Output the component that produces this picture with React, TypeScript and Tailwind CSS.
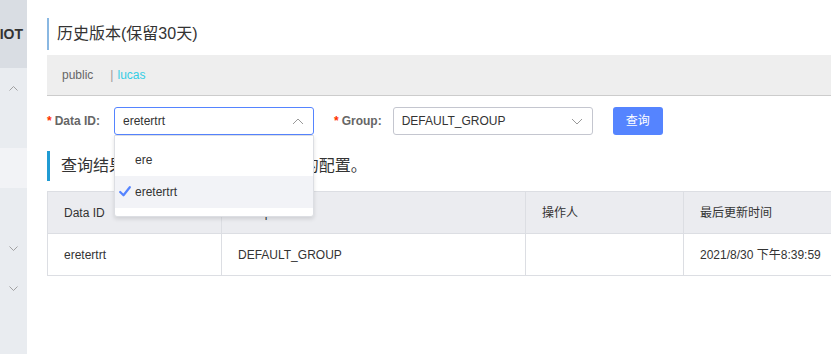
const FONT = '"Liberation Sans", "Noto Sans CJK SC", sans-serif';

const Chevron = ({ up, className }: { up?: boolean; className?: string }) => (
    <svg width="12" height="7" viewBox="0 0 12 7" className={className} fill="none">
        <path d={up ? 'M1 6L6 1L11 6' : 'M1 1L6 6L11 1'} stroke="currentColor" strokeWidth="1" />
    </svg>
);

const SmallChevron = ({ up }: { up?: boolean }) => (
    <svg width="9" height="5" viewBox="0 0 9 5" fill="none" className="text-[#999]">
        <path d={up ? 'M0.5 4.5L4.5 0.5L8.5 4.5' : 'M0.5 0.5L4.5 4.5L8.5 0.5'} stroke="currentColor" strokeWidth="0.9" />
    </svg>
);

const Sidebar = () => (
    <aside className="w-[27px] shrink-0 bg-[#e9ecf0] flex flex-col">
        <div className="h-[68px] bg-[#d9dde3] flex items-center justify-end overflow-hidden pr-[4px]">
            <span className="whitespace-nowrap text-[14px] font-bold text-[#333]">NACOS IOT</span>
        </div>
        <div className="h-[40px] flex items-center justify-center">
            <SmallChevron up />
        </div>
        <div className="h-[40px]" />
        <div className="h-[40px] bg-[#f2f3f6]" />
        <div className="h-[40px]" />
        <div className="h-[40px] flex items-center justify-center">
            <SmallChevron />
        </div>
        <div className="h-[40px] flex items-center justify-center">
            <SmallChevron />
        </div>
    </aside>
);

const Label = ({ text }: { text: string }) => (
    <label className="flex items-center text-[12px] font-bold text-[#666] whitespace-nowrap">
        <span className="text-[#ff3000] mr-[3px]">*</span>
        {text}
    </label>
);

const dataIdOptions = [
    { value: 'ere', selected: false },
    { value: 'eretertrt', selected: true },
];

const DataIdSelect = () => (
    <div className="relative w-[200px] ml-[14px]">
        <div className="h-[28px] border border-[#5584ff] rounded-[3px] flex items-center justify-between pl-[8px] pr-[9px] bg-white">
            <span className="text-[12px] text-[#333]">eretertrt</span>
            <Chevron up className="text-[#999]" />
        </div>
        <ul className="absolute left-0 top-full w-[200px] bg-white border border-[#dcdee3] rounded-b-[3px] shadow-[0_2px_4px_rgba(0,0,0,0.12)] py-[8px] z-10">
            {dataIdOptions.map((opt) => (
                <li
                    key={opt.value}
                    className={`relative h-[32px] flex items-center pl-[20px] text-[12px] text-[#333] ${
                        opt.selected ? 'bg-[#f2f3f7]' : ''
                    }`}
                >
                    {opt.selected && (
                        <svg width="12" height="11" viewBox="0 0 12 11" className="absolute left-[4px] top-[10px]">
                            <path d="M1.2 6L4.5 9.3L10.8 1.2" stroke="#5584ff" strokeWidth="2.2" fill="none" strokeLinecap="round" strokeLinejoin="round" />
                        </svg>
                    )}
                    {opt.value}
                </li>
            ))}
        </ul>
    </div>
);

const columns = ['Data ID', 'Group', '操作人', '最后更新时间'];
const widths = ['w-[174px]', 'w-[304px]', 'w-[158px]', 'w-[174px]'];
const rows = [['eretertrt', 'DEFAULT_GROUP', '', '2021/8/30 下午8:39:59']];

const ResultTable = () => (
    <table className="mt-[10px] border-collapse text-[12px] text-[#333] w-[810px] table-fixed">
        <thead>
            <tr className="bg-[#ebecf0]">
                {columns.map((c, i) => (
                    <th key={c} className={`${widths[i]} h-[42px] border border-[#dcdee3] text-left font-normal pl-[16px]`}>
                        {c}
                    </th>
                ))}
            </tr>
        </thead>
        <tbody>
            {rows.map((r) => (
                <tr key={r[0]} className="bg-white">
                    {r.map((cell, i) => (
                        <td key={i} className={`${widths[i]} h-[42px] border border-[#dcdee3] pl-[16px]`}>
                            {cell}
                        </td>
                    ))}
                </tr>
            ))}
        </tbody>
    </table>
);

const App = () => {
    return (
        <div className="w-[831px] h-[354px] overflow-hidden flex bg-white" style={{ fontFamily: FONT }}>
            <Sidebar />
            <main className="flex-1 pl-[20px] pt-[18px] min-w-0">
                <div className="w-[830px]">
                    <h1 className="h-[32px] border-l-2 border-[#8ab8e2] pl-[8px] flex items-center text-[16px] text-[#333]">
                        历史版本(保留30天)
                    </h1>
                    <div className="mt-[5px] h-[41px] bg-[#eeeeee] border-b border-[#cccccc] flex items-center pl-[15px] text-[12px]">
                        <span className="text-[#666]">public</span>
                        <span className="text-[#999] ml-[17px] mr-[4px]">|</span>
                        <span className="text-[#33cde5]">lucas</span>
                    </div>
                    <div className="mt-[11px] flex items-center h-[28px]">
                        <Label text="Data ID:" />
                        <DataIdSelect />
                        <div className="ml-[20px]">
                            <Label text="Group:" />
                        </div>
                        <div className="ml-[11px] w-[200px] h-[28px] border border-[#c4c6cf] rounded-[3px] flex items-center justify-between pl-[8px] pr-[9px]">
                            <span className="text-[12px] text-[#333]">DEFAULT_GROUP</span>
                            <Chevron className="text-[#999]" />
                        </div>
                        <button className="ml-[20px] w-[50px] h-[28px] rounded-[3px] bg-[#5584ff] text-white text-[12px]">
                            查询
                        </button>
                    </div>
                    <h2 className="mt-[16px] h-[30px] border-l-[3px] border-[#209bd3] pl-[11px] flex items-center text-[16px] text-[#333]">
                        查询结果：共查询到 1 条满足要求的配置。
                    </h2>
                    <ResultTable />
                </div>
            </main>
        </div>
    );
};

export default App;
